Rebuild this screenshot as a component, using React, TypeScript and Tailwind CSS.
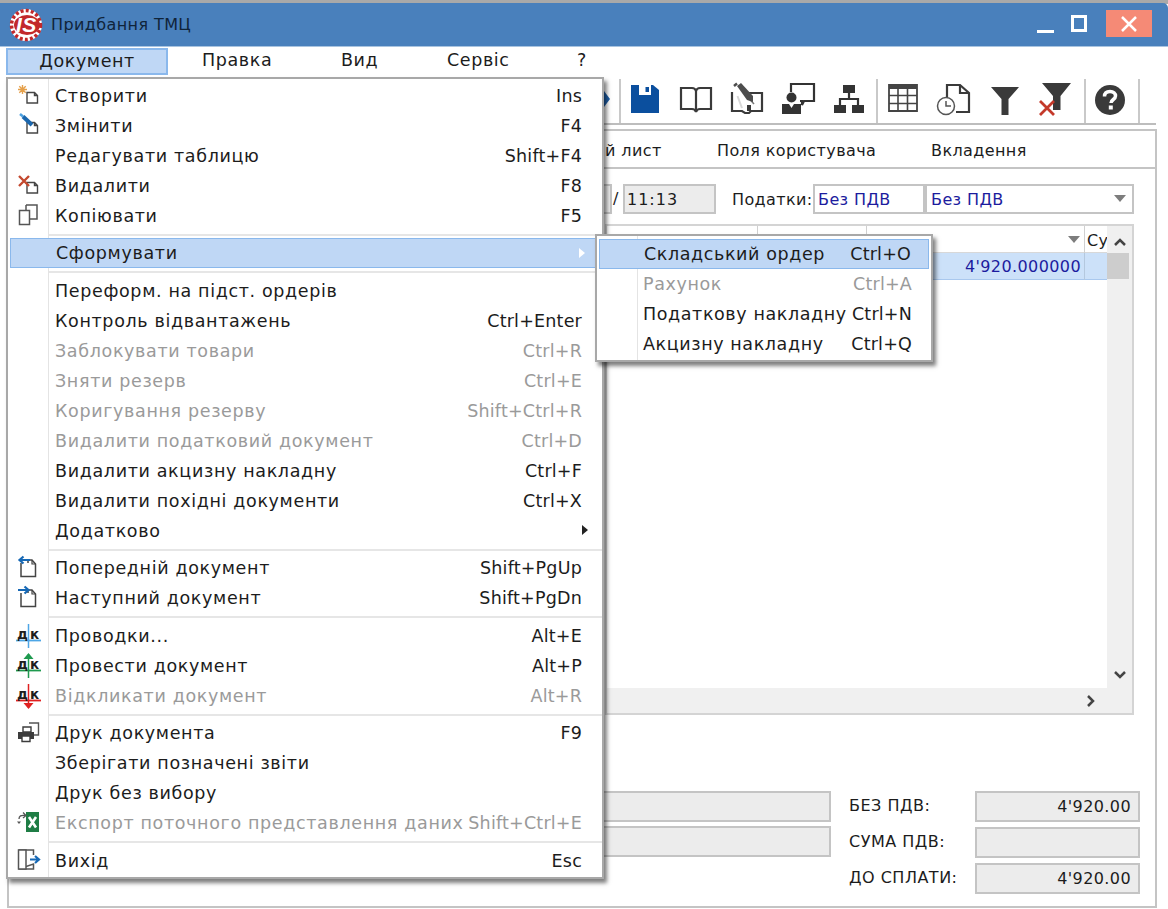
import React from "react";

type Row = { t: string; k?: string; d?: boolean; i?: string; sub?: boolean; hi?: boolean } | 7 | 8;

const rows: Row[] = [
  { t: "Створити", k: "Ins", i: "new" },
  { t: "Змінити", k: "F4", i: "edit" },
  { t: "Редагувати таблицю", k: "Shift+F4" },
  { t: "Видалити", k: "F8", i: "del" },
  { t: "Копіювати", k: "F5", i: "copy" },
  7,
  { t: "Сформувати", sub: true, hi: true },
  8,
  { t: "Переформ. на підст. ордерів" },
  { t: "Контроль відвантажень", k: "Ctrl+Enter" },
  { t: "Заблокувати товари", k: "Ctrl+R", d: true },
  { t: "Зняти резерв", k: "Ctrl+E", d: true },
  { t: "Коригування резерву", k: "Shift+Ctrl+R", d: true },
  { t: "Видалити податковий документ", k: "Ctrl+D", d: true },
  { t: "Видалити акцизну накладну", k: "Ctrl+F" },
  { t: "Видалити похідні документи", k: "Ctrl+X" },
  { t: "Додатково", sub: true },
  7,
  { t: "Попередній документ", k: "Shift+PgUp", i: "prev" },
  { t: "Наступний документ", k: "Shift+PgDn", i: "next" },
  8,
  { t: "Проводки...", k: "Alt+E", i: "dk" },
  { t: "Провести документ", k: "Alt+P", i: "dkup" },
  { t: "Відкликати документ", k: "Alt+R", d: true, i: "dkdown" },
  7,
  { t: "Друк документа", k: "F9", i: "print" },
  { t: "Зберігати позначені звіти" },
  { t: "Друк без вибору" },
  { t: "Експорт поточного представлення даних", k: "Shift+Ctrl+E", d: true, i: "xls" },
  8,
  { t: "Вихід", k: "Esc", i: "exit" },
];

const Doc = () => (
  <path d="M13 9.500V20H23.500V12.500L20.500 9.500ZM20.500 9.500V12.500H23.500" fill="#fff" stroke="#454545" strokeWidth="1.400" />
);

function DK({ color, dir }: { color: string; dir?: "up" | "down" }) {
  return (
    <svg width="28" height="26" viewBox="0 0 28 26" className="block">
      <path d="M14.500 1V25" stroke={color} strokeWidth="1.500" />
      <path d="M2 17.500H27" stroke={color} strokeWidth="1.800" />
      {dir === "up" && <path d="M14.500 0L9.500 6H19.500Z" fill={color} />}
      {dir === "down" && <path d="M14.500 26L9.500 20H19.500Z" fill={color} />}
      <text x="3" y="15.500" fontSize="13.500" fontWeight="700" fill="#1e1e1e" fontFamily="'DejaVu Sans'">д</text>
      <text x="16" y="15.500" fontSize="13.500" fontWeight="700" fill="#1e1e1e" fontFamily="'DejaVu Sans'">к</text>
    </svg>
  );
}

function MenuIcon({ n }: { n?: string }) {
  if (!n) return null;
  if (n === "dk") return <DK color="#4ea6e6" />;
  if (n === "dkup") return <DK color="#1f9a4f" dir="up" />;
  if (n === "dkdown") return <DK color="#e02020" dir="down" />;
  return (
    <svg width="28" height="26" viewBox="0 0 28 26" className="block">
      {n === "new" && (
        <>
          <Doc />
          <path d="M8.500 2V11M4 6.500H13M5.300 3.300L11.700 9.700M11.700 3.300L5.300 9.700" stroke="#e5a04a" strokeWidth="1.400" />
        </>
      )}
      {n === "edit" && (
        <>
          <Doc />
          <path d="M9 3.500L18 12" stroke="#1a66ad" strokeWidth="4" />
          <path d="M6 1L9 3.500" stroke="#4ca0e0" strokeWidth="2.500" />
        </>
      )}
      {n === "del" && (
        <>
          <Doc />
          <path d="M5 3L15 13M15 3L5 13" stroke="#c4492f" strokeWidth="2.400" />
        </>
      )}
      {n === "copy" && (
        <>
          <path d="M12 2H23V16H15.500" fill="#fff" stroke="#555" strokeWidth="1.500" />
          <path d="M12 2V7" stroke="#555" strokeWidth="1.500" />
          <path d="M5.500 7.500H15.500V21.500H5.500Z" fill="#fff" stroke="#555" strokeWidth="1.500" />
        </>
      )}
      {(n === "prev" || n === "next") && (
        <>
          <path d="M7 8V21.500H21.500V9L18 5H14V8" fill="#fff" stroke="#444" strokeWidth="1.500" />
          <path d="M18 5V9H21.500" fill="none" stroke="#444" strokeWidth="1.200" />
          {n === "prev" ? (
            <path d="M16 5H6M9.500 1.500L5.500 5L9.500 8.500" fill="none" stroke="#1668b5" strokeWidth="2.200" />
          ) : (
            <path d="M4 5H14M10.500 1.500L14.500 5L10.500 8.500" fill="none" stroke="#1668b5" strokeWidth="2.200" />
          )}
        </>
      )}
      {n === "print" && (
        <>
          <path d="M15 3H24.500V15H20" fill="#fff" stroke="#555" strokeWidth="1.400" />
          <path d="M9 7H17V12H9Z" fill="#fff" stroke="#3c3c3c" strokeWidth="1.400" />
          <path d="M4 12H20V19H4Z" fill="#3c3c3c" />
          <path d="M8 16H16V21.500H8Z" fill="#fff" stroke="#3c3c3c" strokeWidth="1.400" />
        </>
      )}
      {n === "xls" && (
        <>
          <path d="M12 2H25V22H12Z" fill="#1f7d45" />
          <path d="M15 7L22 17.500M22 7L15 17.500" stroke="#fff" strokeWidth="2.600" />
          <path d="M5 9C5 6 7 5 11 5.500M9 2.500L12 5.500L9 8" fill="none" stroke="#555" strokeWidth="1.300" />
          <path d="M5 14L3 11.500H7Z" fill="#555" />
        </>
      )}
      {n === "exit" && (
        <>
          <path d="M4.500 2H19.500V7M19.500 16V21H4.500Z" fill="none" stroke="#555" strokeWidth="1.500" />
          <path d="M4.500 2H12V21H4.500Z" fill="#fff" stroke="#555" strokeWidth="1.500" />
          <path d="M16 11.500H24M21 8L25 11.500L21 15" fill="none" stroke="#1668b5" strokeWidth="2.200" />
        </>
      )}
    </svg>
  );
}

const tb = "absolute block";

function Toolbar() {
  return (
    <>
      <svg className={tb} style={{ left: 604, top: 84 }} width="8" height="30" viewBox="0 0 8 30">
        <path d="M0 7L6 15L0 23Z" fill="#1e5fa8" />
      </svg>
      {/* save */}
      <svg className={tb} style={{ left: 630, top: 84 }} width="30" height="30" viewBox="0 0 30 30">
        <path d="M1 1H23L29 6V29H1Z" fill="#0b4f9e" />
        <path d="M9 1H21V11H9Z" fill="#fff" />
        <path d="M15.500 3H19V8H15.500Z" fill="#0b4f9e" />
      </svg>
      {/* book */}
      <svg className={tb} style={{ left: 679, top: 84 }} width="34" height="30" viewBox="0 0 34 30">
        <path d="M2 4H13C15 4 16.500 5 17 7C17.500 5 19 4 21 4H32V25H21C19 25 17.500 26 17 28C16.500 26 15 25 13 25H2Z" fill="#fff" stroke="#3a3a3a" strokeWidth="2.200" />
        <path d="M17 7V28" stroke="#3a3a3a" strokeWidth="2.200" />
      </svg>
      {/* edit doc */}
      <svg className={tb} style={{ left: 729, top: 80 }} width="36" height="36" viewBox="0 0 36 36">
        <path d="M3 12V31H13L16 33H20L22 31H33V13H20" fill="none" stroke="#3a3a3a" strokeWidth="2.200" />
        <path d="M15 13L25 24" stroke="#777" strokeWidth="1.500" />
        <path d="M8 6L12 3L24 16L24 22L18 20Z" fill="#4d4d4d" />
        <path d="M8 3.500L5 6" stroke="#4d4d4d" strokeWidth="2.500" />
        <path d="M8.500 16L13 28" stroke="#d8d8d8" strokeWidth="2" />
        <path d="M18 25H22V31H18Z" fill="#3a3a3a" />
      </svg>
      {/* user chat */}
      <svg className={tb} style={{ left: 781, top: 80 }} width="36" height="36" viewBox="0 0 36 36">
        <path d="M10 12V4H33V21H23L21 25V21H19" fill="none" stroke="#333" strokeWidth="2.200" />
        <circle cx="10.500" cy="17.500" r="5" fill="#333" />
        <path d="M1 34V24H8L10.500 28L13 24H20V34Z" fill="#333" />
      </svg>
      {/* hierarchy */}
      <svg className={tb} style={{ left: 832, top: 84 }} width="34" height="30" viewBox="0 0 34 30">
        <path d="M11 1H23V9H11Z M2 21H14V29H2Z M20 21H32V29H20Z" fill="#333" />
        <path d="M17 9V15M8 21V15H26V21" fill="none" stroke="#333" strokeWidth="2.200" />
      </svg>
      {/* table */}
      <svg className={tb} style={{ left: 887, top: 83 }} width="32" height="30" viewBox="0 0 32 30">
        <path d="M2 2H30V28H2Z" fill="#fff" stroke="#444" strokeWidth="1.800" />
        <path d="M2 4H30" stroke="#444" strokeWidth="4" />
        <path d="M2 12.500H30M2 20.500H30M11 2V28M20.500 2V28" stroke="#444" strokeWidth="1.600" />
      </svg>
      {/* clock doc */}
      <svg className={tb} style={{ left: 936, top: 82 }} width="36" height="34" viewBox="0 0 36 34">
        <path d="M11 16V3H24L33 11V30H20" fill="none" stroke="#3a3a3a" strokeWidth="2.200" />
        <path d="M24 3V11H33" fill="none" stroke="#3a3a3a" strokeWidth="2.200" />
        <circle cx="10" cy="24" r="8.500" fill="#fff" stroke="#555" strokeWidth="1.500" />
        <path d="M10 19V24H15" fill="none" stroke="#555" strokeWidth="1.500" />
      </svg>
      {/* filter */}
      <svg className={tb} style={{ left: 990, top: 84 }} width="30" height="32" viewBox="0 0 30 32">
        <path d="M1 3H29L18.500 15V31H11.500V15Z" fill="#3a3a3a" />
      </svg>
      {/* filter x */}
      <svg className={tb} style={{ left: 1036, top: 80 }} width="36" height="38" viewBox="0 0 36 38">
        <path d="M6 3H35L24.500 16V30H17V16Z" fill="#3a3a3a" />
        <path d="M4 21L18 35M18 21L4 35" stroke="#c4392a" strokeWidth="2.800" />
      </svg>
      {/* help */}
      <svg className={tb} style={{ left: 1094, top: 84 }} width="32" height="32" viewBox="0 0 32 32">
        <circle cx="16" cy="16" r="15" fill="#3a3a3a" />
        <path d="M10.500 12.500C10.500 9 13 7.500 16 7.500C19.500 7.500 21.500 9.500 21.500 12C21.500 15.500 17 15.500 17 19" fill="none" stroke="#fff" strokeWidth="3.500" />
        <path d="M14.800 21.500H18.800V25.500H14.800Z" fill="#fff" />
      </svg>
    </>
  );
}

const subItems = [
  { t: "Складський ордер", k: "Ctrl+O", hi: true },
  { t: "Рахунок", k: "Ctrl+A", d: true },
  { t: "Податкову накладну", k: "Ctrl+N" },
  { t: "Акцизну накладну", k: "Ctrl+Q" },
];

export default function App() {
  return (
    <div
      className="relative w-[1168px] h-[909px] overflow-hidden bg-white text-[#1c1c1c] text-[16px] leading-[30px] tracking-[0.4px]"
      style={{ fontFamily: "'DejaVu Sans',sans-serif" }}
    >
      {/* top strip + title */}
      <div className="absolute left-0 top-0 w-full h-[4px] bg-[#a9a9a9]" />
      <div className="absolute left-0 top-[3px] w-full h-[43px] bg-[#4980bc] rounded-tr-[5px] flex items-center">
        <svg className="ml-[9px] block" width="36" height="38" viewBox="0 0 36 38">
          <circle cx="17" cy="19" r="16" fill="#fff" />
          <circle cx="17" cy="19" r="14.500" fill="none" stroke="#c2282a" strokeWidth="3.500" strokeDasharray="3 2.200" />
          <ellipse cx="18" cy="19" rx="13" ry="10" fill="#c2282a" />
          <text x="7" y="26" fontSize="21" fontWeight="700" fontStyle="italic" fill="#fff" fontFamily="'Liberation Sans',sans-serif">IS</text>
        </svg>
        <span className="ml-[6px] text-[#10243a]">Придбання ТМЦ</span>
      </div>
      {/* window controls */}
      <div className="absolute left-[1037px] top-[30px] w-[17px] h-[3px] bg-white" />
      <div className="absolute left-[1071px] top-[15px] w-[16px] h-[17px] border-[3px] border-white" />
      <div className="absolute left-[1106px] top-[10px] w-[46px] h-[27px] bg-[#f58a76] flex items-center justify-center">
        <svg width="18" height="18" viewBox="0 0 18 18" className="block">
          <path d="M2 2L16 16M16 2L2 16" stroke="#fff" strokeWidth="2.500" />
        </svg>
      </div>

      {/* menu bar */}
      <div className="absolute left-0 top-[46px] w-full h-[29px] border-t border-[#a9c4e0] text-[17.500px] tracking-[0.6px]">
        <div className="absolute left-[6px] top-[1px] w-[162px] h-[27px] bg-[#bfd7f5] border-2 border-[#8ab8ec] text-center leading-[23px]">Документ</div>
        <span className="absolute left-[202px] top-[-2px]">Правка</span>
        <span className="absolute left-[341px] top-[-2px]">Вид</span>
        <span className="absolute left-[447px] top-[-2px]">Сервіс</span>
        <span className="absolute left-[577px] top-[-2px]">?</span>
      </div>

      {/* toolbar */}
      <div className="absolute left-[7px] top-[75px] w-[1149px] h-[50px] border-b-2 border-[#bdbdbd]">
        {[612, 869, 1077, 1131].map((x) => (
          <div key={x} className="absolute top-[4px] w-[2px] h-[44px] bg-[#c9c9c9]" style={{ left: x }} />
        ))}
      </div>
      <Toolbar />

      {/* main panel */}
      <div className="absolute left-[7px] top-[129px] w-[1150px] h-[779px] border-2 border-[#c4c4c4]" />
      <div className="absolute left-[7px] top-[167px] w-[1150px] h-[2px] bg-[#c4c4c4]" />
      <span className="absolute left-[605px] top-[136px]">й лист</span>
      <span className="absolute left-[717px] top-[136px]">Поля користувача</span>
      <span className="absolute left-[931px] top-[136px]">Вкладення</span>

      {/* fields row */}
      <div className="absolute left-[600px] top-[184px] w-[12px] h-[30px] bg-[#ececec] border-2 border-[#c4c4c4]" />
      <span className="absolute left-[613px] top-[184px]">/</span>
      <div className="absolute left-[623px] top-[184px] w-[93px] h-[30px] bg-[#ececec] border-2 border-[#c4c4c4] pl-[2px] leading-[28px] tracking-[1px]">11:13</div>
      <span className="absolute left-[732px] top-[185px]">Податки:</span>
      <div className="absolute left-[813px] top-[184px] w-[112px] h-[30px] border-2 border-[#c4c4c4] pl-[3px] leading-[28px] text-[#1c1c9e]">Без ПДВ</div>
      <div className="absolute left-[925px] top-[184px] w-[209px] h-[30px] border-2 border-[#c4c4c4] pl-[4px] leading-[28px] text-[#1c1c9e]">
        Без ПДВ
        <svg className="absolute right-[6px] top-[9px] block" width="12" height="8" viewBox="0 0 12 8">
          <path d="M0 0H12L6 7Z" fill="#7d7d7d" />
        </svg>
      </div>

      {/* table */}
      <div className="absolute left-[605px] top-[224px] w-[529px] h-[491px] border-2 border-[#d4d4d4]">
        <div className="absolute left-0 top-[26px] w-[500px] h-[1px] bg-[#d8d8d8]" />
        <div className="absolute left-[150px] top-0 w-[1px] h-[27px] bg-[#d0d0d0]" />
        <div className="absolute left-[259px] top-0 w-[1px] h-[27px] bg-[#d0d0d0]" />
        <div className="absolute left-[477px] top-0 w-[1px] h-[54px] bg-[#d0d0d0]" />
        <svg className="absolute left-[461px] top-[10px] block" width="12" height="8" viewBox="0 0 12 8">
          <path d="M0 0H12L6 7Z" fill="#7d7d7d" />
        </svg>
        <span className="absolute left-[480px] top-0 whitespace-nowrap">Су</span>
        <div className="absolute left-0 top-[27px] w-[500px] h-[27px] bg-[#cce1f9] border-b border-[#a9c8ee]" />
        <div className="absolute left-[477px] top-[27px] w-[1px] h-[27px] bg-[#b4c8de]" />
        <span className="absolute right-[51px] top-[26px] text-[#1c1c9e]">4'920.000000</span>
        {/* vscroll */}
        <div className="absolute left-[500px] top-0 w-[25px] h-[487px] bg-[#f0f0f0]" />
        <svg className="absolute left-[506px] top-[11px] block" width="14" height="10" viewBox="0 0 14 10">
          <path d="M2 8L7 3L12 8" fill="none" stroke="#444" strokeWidth="2.500" />
        </svg>
        <div className="absolute left-[500px] top-[27px] w-[22px] h-[26px] bg-[#cdcdcd]" />
        <svg className="absolute left-[506px] top-[444px] block" width="14" height="10" viewBox="0 0 14 10">
          <path d="M2 2L7 7L12 2" fill="none" stroke="#444" strokeWidth="2.500" />
        </svg>
        {/* hscroll */}
        <div className="absolute left-0 top-[462px] w-[525px] h-[25px] bg-[#f0f0f0]" />
        <svg className="absolute left-[479px] top-[468px] block" width="10" height="14" viewBox="0 0 10 14">
          <path d="M2 2L7 7L2 12" fill="none" stroke="#444" strokeWidth="2.500" />
        </svg>
      </div>

      {/* totals */}
      <div className="absolute left-[560px] top-[791px] w-[271px] h-[31px] bg-[#ececec] border-2 border-[#c4c4c4]" />
      <div className="absolute left-[560px] top-[826px] w-[271px] h-[31px] bg-[#ececec] border-2 border-[#c4c4c4]" />
      {[
        { t: "БЕЗ ПДВ:", v: "4'920.00", y: 791 },
        { t: "СУМА ПДВ:", v: "", y: 827 },
        { t: "ДО СПЛАТИ:", v: "4'920.00", y: 863 },
      ].map((r) => (
        <React.Fragment key={r.t}>
          <span className="absolute left-[849px] tracking-[0.5px]" style={{ top: r.y }}>{r.t}</span>
          <div className="absolute left-[975px] w-[165px] h-[31px] bg-[#ececec] border-2 border-[#c4c4c4] text-right pr-[7px] leading-[28px]" style={{ top: r.y }}>{r.v}</div>
        </React.Fragment>
      ))}

      {/* main dropdown */}
      <div className="absolute left-[6px] top-[77px] w-[598px] h-[802px] bg-white border-2 border-[#a8a8a8] shadow-[3px_4px_4px_rgba(0,0,0,0.5)] pt-[2px] flex flex-col text-[17.500px]">
        <div className="absolute left-[40px] top-0 w-[1px] h-full bg-[#e4e4e4]" />
        {rows.map((r, i) =>
          typeof r === "number" ? (
            <div key={i} className={`${r === 7 ? "h-[7px]" : "h-[8px]"} shrink-0 flex items-center pl-[41px]`}>
              <div className="h-[2px] w-full bg-[#e6e6e6]" />
            </div>
          ) : (
            <div
              key={i}
              className={`relative h-[30px] shrink-0 flex items-center justify-between whitespace-nowrap pl-[47px] pr-[20px] ${r.hi ? "mx-[2px] bg-[#bfd7f5] border border-[#8ab8ec]" : ""} ${r.d ? "text-[#9a9a9a]" : ""}`}
            >
              <span className={`tracking-[0.65px] ${r.hi ? "-ml-[2px]" : ""}`}>{r.t}</span>
              {r.k && <span className="tracking-[0.2px]">{r.k}</span>}
              {r.sub && (
                <svg className={`absolute right-[13px] top-[9px] block`} width="8" height="10" viewBox="0 0 8 10">
                  <path d="M1 0L7 5L1 10Z" fill={r.hi ? "#fff" : "#222"} />
                </svg>
              )}
              <span className="absolute left-[6px] top-[2px]">
                <MenuIcon n={r.i} />
              </span>
            </div>
          )
        )}
      </div>

      {/* submenu */}
      <div className="absolute left-[595px] top-[234px] w-[338px] h-[128px] bg-white border-2 border-[#a8a8a8] shadow-[3px_4px_4px_rgba(0,0,0,0.5)] pt-[3px] text-[17.500px]">
        <div className="absolute left-[40px] top-0 w-[1px] h-full bg-[#e4e4e4]" />
        {subItems.map((r) => (
          <div
            key={r.t}
            className={`relative h-[30px] mx-[2px] flex items-center justify-between whitespace-nowrap pl-[44px] pr-[17px] ${r.hi ? "bg-[#bfd7f5] border border-[#8ab8ec]" : ""} ${r.d ? "text-[#9a9a9a]" : ""}`}
          >
            <span className="tracking-[0.6px]">{r.t}</span>
            <span className="tracking-[0.2px]">{r.k}</span>
          </div>
        ))}
      </div>
    </div>
  );
}
